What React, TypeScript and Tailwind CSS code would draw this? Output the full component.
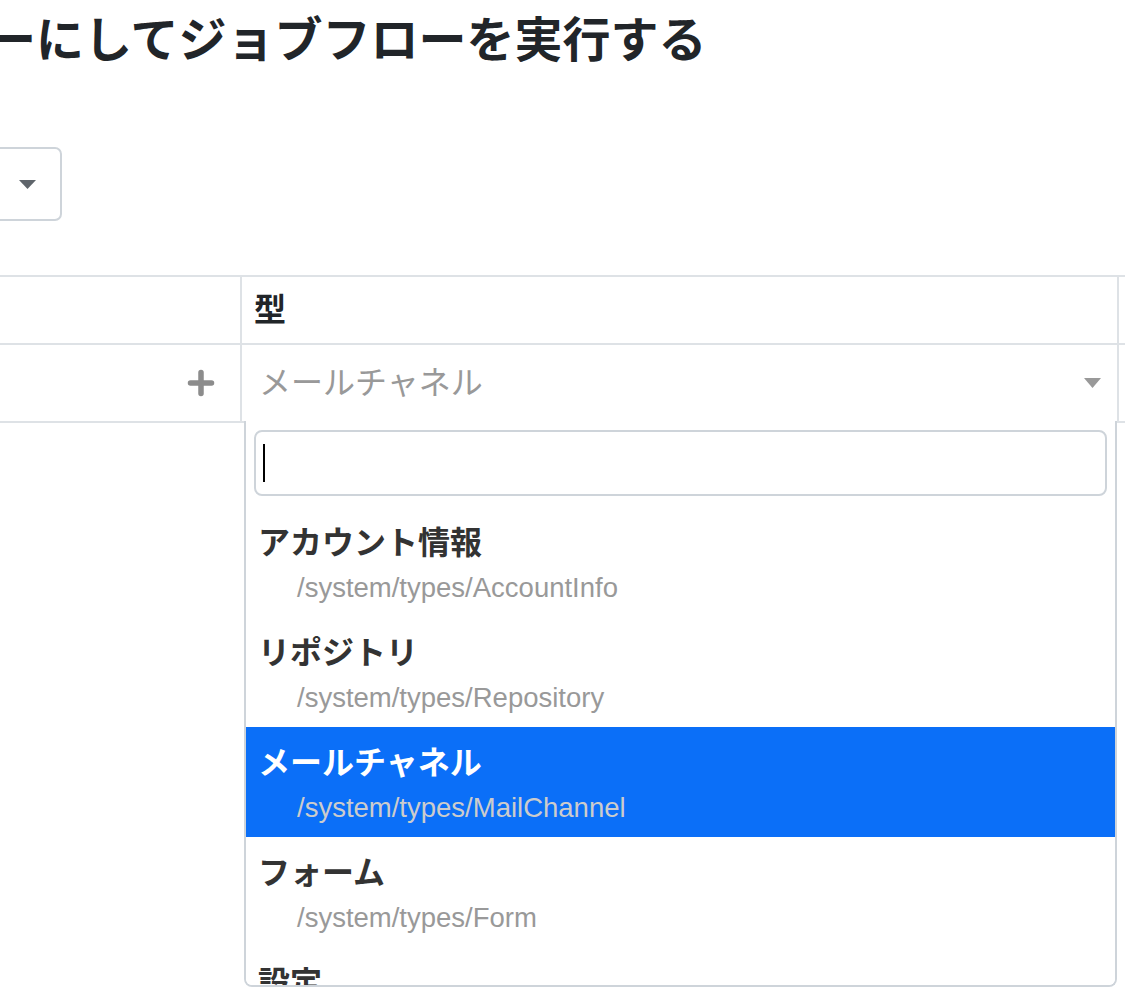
import React from "react";

const items = [
  { title: "アカウント情報", path: "/system/types/AccountInfo" },
  { title: "リポジトリ", path: "/system/types/Repository" },
  { title: "メールチャネル", path: "/system/types/MailChannel", active: true },
  { title: "フォーム", path: "/system/types/Form" },
  { title: "設定", path: "" },
];

export default function App() {
  return (
    <div className="relative w-[1125px] h-[1005px] overflow-hidden bg-white font-['Liberation_Sans','Noto_Sans_CJK_JP',sans-serif]">
      <h1 className="mt-[17px] ml-[-12px] whitespace-nowrap text-[48px] leading-[48px] font-bold text-[#212529]">
        ーにしてジョブフローを実行する
      </h1>

      <div className="mt-[82px] ml-[-20px] flex h-[74px] w-[82px] items-center justify-end rounded-[7px] border-2 border-[#ced4da] pr-[24px]">
        <svg width="17" height="9" viewBox="0 0 17 9">
          <path d="M0 0 H17 L8.5 9 Z" fill="#5f656b" />
        </svg>
      </div>

      <div className="mt-[54px] w-[1300px] border-t-2 border-[#dee2e6]">
        <div className="flex h-[68px] border-b-2 border-[#dee2e6]">
          <div className="w-[242px] border-r-2 border-[#dee2e6]" />
          <div className="flex w-[877px] items-center border-r-2 border-[#dee2e6] pl-[12px] text-[32px] font-bold text-[#212529]">
            型
          </div>
          <div className="flex-1" />
        </div>
        <div className="relative flex h-[78px] border-b-2 border-[#dee2e6]">
          <div className="flex w-[242px] items-center justify-end border-r-2 border-[#dee2e6] pr-[25px]">
            <svg width="28" height="28" viewBox="0 0 28 28">
              <path d="M3.5 14 H24.5 M14 3.5 V24.5" stroke="#8c8c8c" strokeWidth="5.5" strokeLinecap="round" />
            </svg>
          </div>
          <div className="flex w-[877px] items-center justify-between border-r-2 border-[#dee2e6] pl-[17px] pr-[16px]">
            <span className="text-[32px] text-[#999999]">メールチャネル</span>
            <svg width="17" height="10" viewBox="0 0 17 10">
              <path d="M0 0 H17 L8.5 10 Z" fill="#999999" />
            </svg>
          </div>
          <div className="flex-1" />

          <div className="absolute left-[244px] top-[76px] flex h-[566px] w-[873px] flex-col overflow-hidden rounded-b-[8px] border-x-2 border-b-2 border-[#ced4da] bg-white">
            <div className="px-[8px] pt-[9px]">
              <div className="flex h-[66px] items-center rounded-[8px] border-2 border-[#ced4da] pl-[7px]">
                <div className="h-[38px] w-[2px] bg-black" />
              </div>
            </div>
            <div className="mt-[11px] flex-1 overflow-hidden">
              {items.map((it) => (
                <div
                  key={it.title}
                  className={
                    it.active
                      ? "h-[110px] bg-[#0b6ff8] pt-[16px]"
                      : "h-[110px] bg-white pt-[16px]"
                  }
                >
                  <div
                    className={
                      it.active
                        ? "pl-[12px] text-[32px] leading-[40px] font-bold text-white"
                        : "pl-[12px] text-[32px] leading-[40px] font-bold text-[#333333]"
                    }
                  >
                    {it.title}
                  </div>
                  {it.path ? (
                    <div
                      className={
                        it.active
                          ? "mt-[9px] pl-[51px] text-[27.5px] leading-[32px] text-[#cccccc]"
                          : "mt-[9px] pl-[51px] text-[27.5px] leading-[32px] text-[#999999]"
                      }
                    >
                      {it.path}
                    </div>
                  ) : null}
                </div>
              ))}
            </div>
          </div>
        </div>
      </div>
    </div>
  );
}
